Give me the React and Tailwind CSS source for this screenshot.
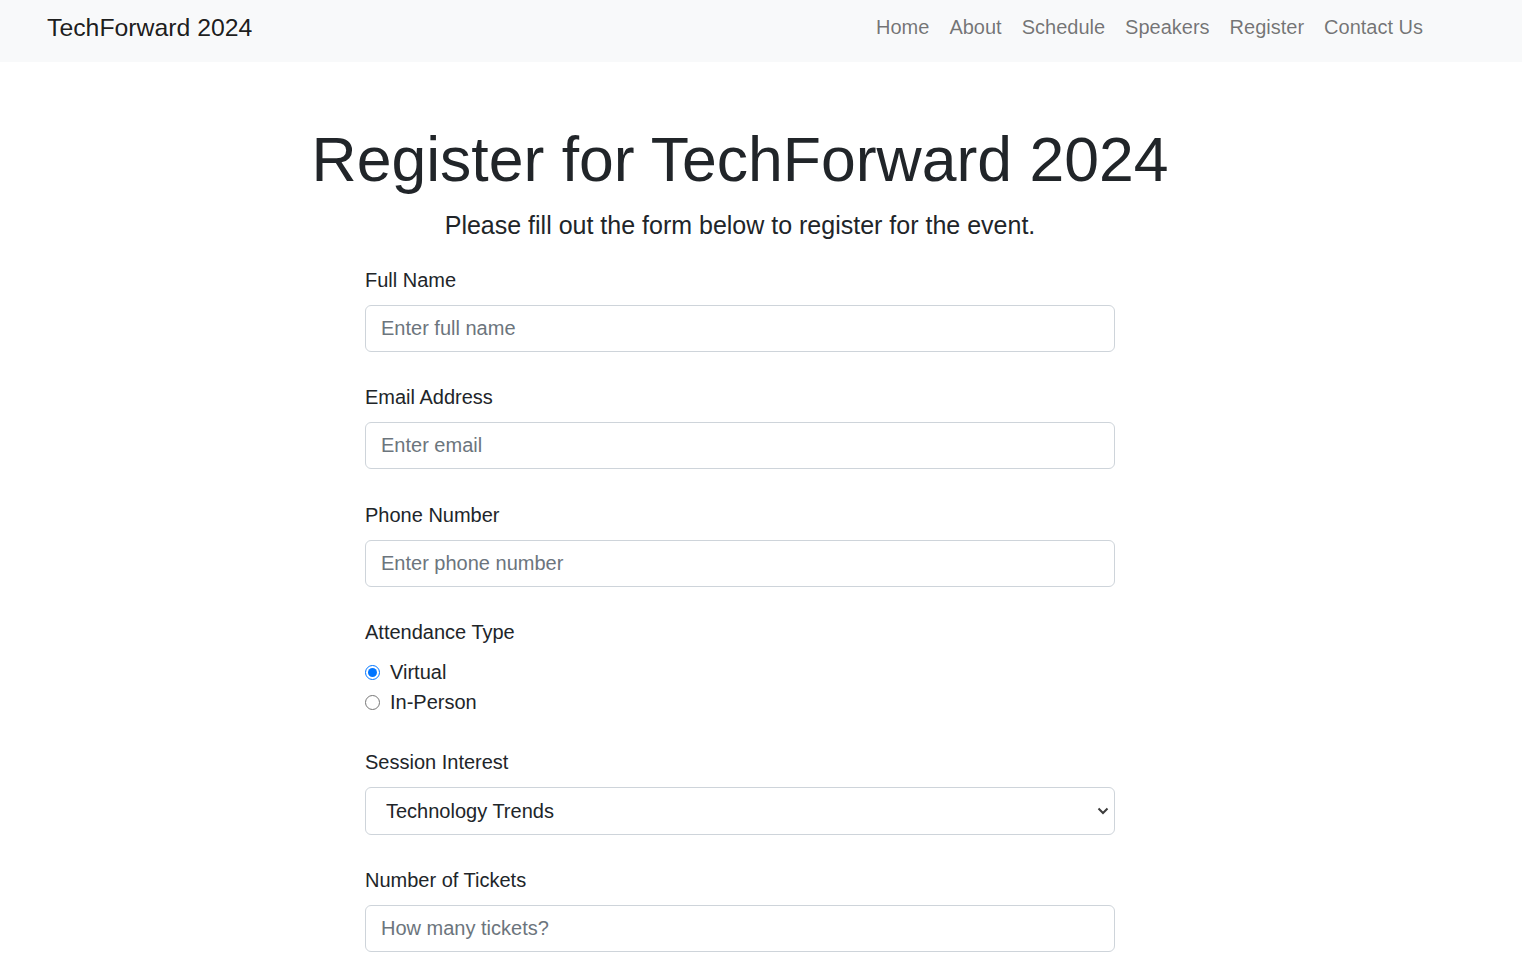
import React, { useState } from 'react';

const navLinks = ['Home', 'About', 'Schedule', 'Speakers', 'Register', 'Contact Us'];

// simple labelled text input, bootstrap-ish look
const Field = ({ id, label, placeholder, type = 'text' }) => (
  <div className="mb-[30.5px]">
    <label htmlFor={id} className="block mb-[10px] text-[20px] leading-[30px] text-[#212529]">
      {label}
    </label>
    <input
      id={id}
      type={type}
      placeholder={placeholder}
      className="block w-full h-[47px] px-[15px] text-[20px] leading-[30px] text-[#212529] bg-white border border-[#ced4da] rounded-[6px] outline-none placeholder:text-[#6c757d]"
    />
  </div>
);

const App = () => {
  const [attendance, setAttendance] = useState('virtual');
  const [session, setSession] = useState('Technology Trends');

  return (
    <div className="min-h-screen bg-white text-[#212529] font-['Liberation_Sans',Arial,sans-serif]">
      <nav className="h-[62px] bg-[#f8f9fa] flex items-center justify-between pb-[8px] pl-[47px] pr-[89px]">
        <a href="#" className="text-[24.8px] leading-[37px] text-[rgba(0,0,0,0.9)]">
          TechForward 2024
        </a>
        <ul className="flex">
          {navLinks.map(link => (
            <li key={link}>
              <a href="#" className="block px-[10px] text-[20px] leading-[30px] text-[rgba(0,0,0,0.55)]">
                {link}
              </a>
            </li>
          ))}
        </ul>
      </nav>

      <main className="w-[1480px] flex flex-col items-center pt-[60px]">
        <h1 className="text-[62.5px] leading-[75px] font-normal text-center">
          Register for TechForward 2024
        </h1>
        <p className="mt-[10px] mb-[20px] text-[25px] leading-[37.5px] text-center">
          Please fill out the form below to register for the event.
        </p>

        <form className="w-[750px]" onSubmit={e => e.preventDefault()}>
          <Field id="fullName" label="Full Name" placeholder="Enter full name" />
          <Field id="email" label="Email Address" placeholder="Enter email" type="email" />
          <Field id="phone" label="Phone Number" placeholder="Enter phone number" type="tel" />

          <div className="mb-[30px]">
            <div className="mb-[10px] text-[20px] leading-[30px]">Attendance Type</div>
            {[
              { value: 'virtual', text: 'Virtual' },
              { value: 'inperson', text: 'In-Person' },
            ].map(opt => (
              <label key={opt.value} className="flex items-center h-[30px] text-[20px] leading-[30px]">
                <input
                  type="radio"
                  name="attendance"
                  value={opt.value}
                  checked={attendance === opt.value}
                  onChange={() => setAttendance(opt.value)}
                  className="w-[15px] h-[15px] m-0 mr-[10px] accent-[#0075ff]"
                />
                {opt.text}
              </label>
            ))}
          </div>

          <div className="mb-[30px]">
            <label htmlFor="session" className="block mb-[10px] text-[20px] leading-[30px]">
              Session Interest
            </label>
            <div className="relative">
              <select
                id="session"
                value={session}
                onChange={e => setSession(e.target.value)}
                className="block w-full h-[48px] pl-[20px] pr-[40px] text-[20px] leading-[30px] text-[#212529] bg-white border border-[#ced4da] rounded-[6px] appearance-none outline-none"
              >
                <option>Technology Trends</option>
                <option>Artificial Intelligence</option>
                <option>Cloud Computing</option>
                <option>Cybersecurity</option>
              </select>
              <svg
                className="absolute right-[6px] top-1/2 -translate-y-1/2 pointer-events-none"
                width="12"
                height="8"
                viewBox="0 0 12 8"
                fill="none"
              >
                <path d="M1.5 1.5 6 6l4.5-4.5" stroke="#3c3c3c" strokeWidth="2" />
              </svg>
            </div>
          </div>

          <Field id="tickets" label="Number of Tickets" placeholder="How many tickets?" type="number" />
        </form>
      </main>
    </div>
  );
};

export default App;
